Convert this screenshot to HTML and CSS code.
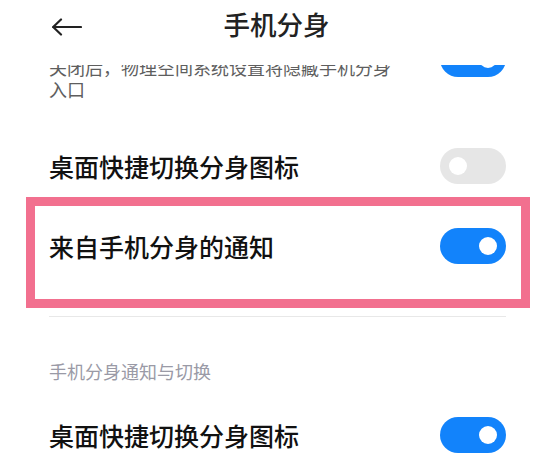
FILE: index.html
```html
<!DOCTYPE html>
<html lang="zh-CN">
<head>
<meta charset="utf-8">
<title>手机分身</title>
<link rel="stylesheet" href="styles.css">
</head>
<body>
<div class="screen">
  <header class="appbar">
    <div class="back">
      <svg width="30" height="18" viewBox="0 0 30 18" aria-hidden="true">
        <path d="M1 9 H29 M9 1.5 L1.2 9 L9 16.5" fill="none" stroke="#222" stroke-width="2.2" stroke-linecap="round" stroke-linejoin="round"/>
      </svg>
    </div>
    <h1 class="title">手机分身</h1>
    <div></div>
  </header>
  <main class="scroll">
    <div class="list">
      <div class="row row-desc">
        <p class="desc">关闭后，物理空间系统设置将隐藏手机分身入口</p>
        <span class="switch on"><span class="knob"></span></span>
      </div>
      <div class="row">
        <span class="label">桌面快捷切换分身图标</span>
        <span class="switch off"><span class="knob"></span></span>
      </div>
      <div class="row highlighted">
        <span class="label">来自手机分身的通知</span>
        <span class="switch on"><span class="knob"></span></span>
        <span class="mark"></span>
      </div>
      <div class="divider"></div>
      <div class="section">手机分身通知与切换</div>
      <div class="row">
        <span class="label">桌面快捷切换分身图标</span>
        <span class="switch on"><span class="knob"></span></span>
      </div>
    </div>
  </main>
</div>
</body>
</html>
```

FILE: styles.css
```css
* { box-sizing: border-box; }
html, body { margin: 0; padding: 0; background: #fff; }
body {
  font-family: "Noto Sans CJK SC", "Noto Sans", sans-serif;
  color: #111;
}
.screen {
  width: 553px;
  height: 455px;
  overflow: hidden;
  background: #fff;
}
.appbar {
  height: 65px;
  display: grid;
  grid-template-columns: 1fr auto 1fr;
  align-items: start;
  background: #fff;
}
.back {
  padding-left: 52px;
  padding-top: 18px;
  display: flex;
}
.back svg { display: block; }
.title {
  margin: 0;
  font-size: 26.5px;
  font-weight: 500;
  color: #222;
  line-height: 36px;
  padding-top: 6px;
}
.scroll {
  height: 390px;
  overflow: hidden;
}
.list {
  margin-top: -24px;
}
.row {
  position: relative;
  height: 80px;
  padding: 0 47px 0 49px;
  display: flex;
  align-items: center;
  justify-content: space-between;
}
.row-desc {
  height: 85px;
  align-items: flex-start;
}
.desc {
  margin: 15px 0 0;
  width: 350px;
  font-size: 18px;
  line-height: 22px;
  color: #5e5e5e;
}
.label {
  font-size: 25px;
  font-weight: 500;
  color: #111;
  line-height: 32px;
}
.switch {
  flex: none;
  width: 66px;
  height: 36px;
  border-radius: 18px;
  display: flex;
  align-items: center;
  padding: 0 9px;
}
.switch.on { background: #1283fb; justify-content: flex-end; }
.switch.off { background: #e6e6e6; justify-content: flex-start; }
.knob {
  width: 18px;
  height: 18px;
  border-radius: 50%;
  background: #fff;
}
.mark {
  position: absolute;
  left: 26px;
  right: 23px;
  top: -9px;
  height: 111px;
  border: 9px solid #f2708f;
  pointer-events: none;
}
.divider {
  height: 1px;
  margin: 30px 47px 0 49px;
  background: #e8e8e8;
}
.section {
  margin-top: 42px;
  padding-left: 49px;
  font-size: 18px;
  line-height: 24px;
  color: #9a9aa6;
}
.section + .row {
  margin-top: 12px;
}
```
